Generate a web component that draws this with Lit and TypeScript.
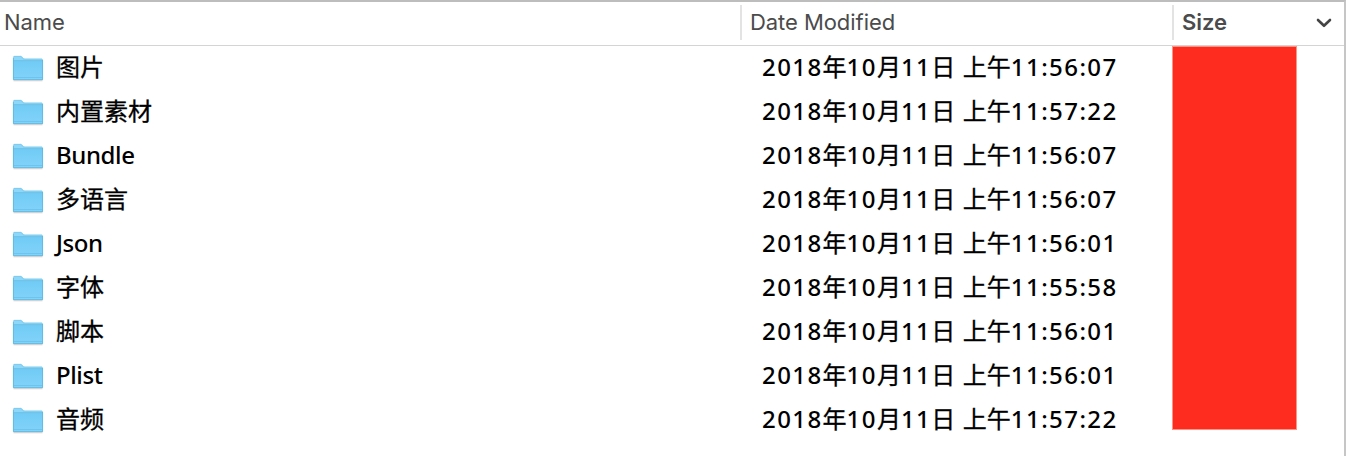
import { LitElement, html, css } from "lit";
import { customElement, property } from "lit/decorators.js";

@customElement("folder-icon")
class FolderIcon extends LitElement {
  static styles = css`
    :host { display: block; width: 32px; height: 28px; padding-top: 2px; }
    svg { display: block; }
  `;
  render() {
    return html`<svg width="32" height="28" viewBox="0 0 32 28">
      <defs>
        <linearGradient id="front" x1="0" y1="0" x2="0" y2="1">
          <stop offset="0" stop-color="#70cbf5" />
          <stop offset="1" stop-color="#83d3fa" />
        </linearGradient>
      </defs>
      <path d="M1.5 25.6h29" stroke="#000" stroke-opacity=".16" stroke-width="1.4" />
      <path d="M1 24V2.2Q1 1 2.2 1H8.6Q9.6 1 10.3 1.8L11.3 3Q12 3.7 13 3.7H29.8Q31 3.7 31 4.9V24Q31 25 30 25H2Q1 25 1 24Z" fill="#8fd7f8" />
      <path d="M1 6H31V24Q31 25 30 25H2Q1 25 1 24Z" fill="url(#front)" />
      <path d="M1 5.6H31" stroke="#69bfe6" stroke-width=".9" />
      <path d="M1.5 22.5H30.5" stroke="#69c0e9" stroke-width=".8" />
      <path d="M1.4 3V24.6H30.6V5" fill="none" stroke="#5fb3db" stroke-width=".8" />
      <path d="M2 1.3H8.8L11.6 4H30" fill="none" stroke="#6cbfe5" stroke-width=".6" />
    </svg>`;
  }
}

@customElement("file-row")
class FileRow extends LitElement {
  @property() name = "";
  @property() time = "";
  static styles = css`
    :host {
      display: grid;
      grid-template-columns: 12px 44px 706px 1fr;
      align-items: center;
      height: 44px;
      color: #000;
      font: 400 24px/42px "Noto Sans", "Noto Sans CJK SC", sans-serif;
      white-space: nowrap;
    }
    folder-icon { grid-column: 2; }
    .text { height: 44px; }
    .han { -webkit-text-stroke: 0.3px #000; }
    .latin { font-weight: 500; letter-spacing: -0.4px; }
    .digits { font-weight: 500; letter-spacing: 1.42px; }
  `;
  render() {
    const latin = /^[A-Z]/.test(this.name);
    const parts = this.time.split(/([\d: ]+)/).filter(Boolean);
    return html`<folder-icon></folder-icon
      ><span class="text ${latin ? "latin" : "han"}">${this.name}</span
      ><span class="text">${parts.map((p) => (/[\d ]/.test(p) ? html`<span class="digits">${p}</span>` : html`<span class="han">${p}</span>`))}</span>`;
  }
}

const files = [
  ["图片", "11:56:07"],
  ["内置素材", "11:57:22"],
  ["Bundle", "11:56:07"],
  ["多语言", "11:56:07"],
  ["Json", "11:56:01"],
  ["字体", "11:55:58"],
  ["脚本", "11:56:01"],
  ["Plist", "11:56:01"],
  ["音频", "11:57:22"],
];

@customElement("app-root")
class AppRoot extends LitElement {
  static styles = css`
    :host {
      display: block;
      box-sizing: border-box;
      width: 1346px;
      height: 456px;
      overflow: hidden;
      background: #fff;
      border-top: 2px solid #bdbdbd;
      border-right: 2px solid #c6c6c6;
    }
    .header {
      display: grid;
      grid-template-columns: 740px 432px 1fr;
      box-sizing: border-box;
      height: 44px;
      padding-top: 3px;
      border-bottom: 1px solid #d4d4d4;
      color: #4b4b4b;
      font: 430 22px/35px Inter, sans-serif;
      letter-spacing: -0.06px;
    }
    .cell { box-sizing: border-box; height: 35px; padding-left: 4px; }
    .cell.divided { padding-left: 8px; border-left: 2px solid #e3e3e3; }
    .cell.size {
      display: flex;
      align-items: center;
      justify-content: space-between;
      padding-right: 12px;
      font-weight: 600;
    }
    .body { display: grid; grid-template-columns: 1172px 125px; }
    .mask {
      box-sizing: border-box;
      height: 384px;
      background: #fe2c1f;
      border: 1px solid #ff9384;
    }
  `;
  render() {
    return html`
      <div class="header">
        <div class="cell"><span class="label">Name</span></div>
        <div class="cell divided"><span class="label">Date Modified</span></div>
        <div class="cell divided size">
          <span class="label">Size</span>
          <svg width="16" height="10" viewBox="0 0 16 10">
            <path d="M2 2L8 7.8L14 2" fill="none" stroke="#444" stroke-width="2.6" stroke-linecap="round" stroke-linejoin="round" />
          </svg>
        </div>
      </div>
      <div class="body">
        <div>
          ${files.map(([n, t]) => html`<file-row .name=${n} .time=${`2018年10月11日 上午${t}`}></file-row>`)}
        </div>
        <div class="mask"></div>
      </div>
    `;
  }
}
